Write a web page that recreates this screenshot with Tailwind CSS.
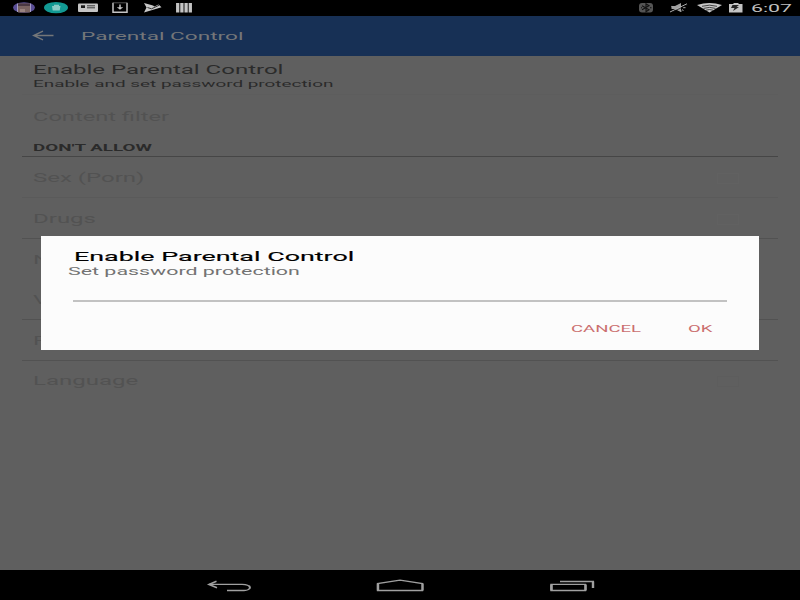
<!DOCTYPE html>
<html lang="en">
<head>
<meta charset="utf-8">
<title>Parental Control</title>
<script src="https://cdn.jsdelivr.net/npm/@tailwindcss/browser@4"></script>
</head>
<body class="w-[800px] h-[600px] overflow-hidden bg-black font-['Roboto',sans-serif]">
<div class="relative flex flex-col w-[800px] h-[600px]">
  <!-- Status bar -->
  <div class="h-4 shrink-0 bg-black">
    <svg class="block" width="800" height="16" viewBox="0 0 800 16">
      <ellipse cx="24" cy="7.5" rx="11" ry="5.3" fill="#5a4e96"/>
      <rect x="18" y="3.500" width="12" height="9" fill="#7a6462"/>
      <path d="M18 3.500h12v2.500H18z" fill="#4b3943"/><path d="M20 9h5v3h-5z" fill="#9a8480"/>
      <path d="M17.500 3.500v8.500M30.500 3.500v8.500" stroke="#a39bc4"/>
      <ellipse cx="56" cy="7.600" rx="12" ry="5.700" fill="#129993"/>
      <path d="M52 6h8.500l-.8 4.500h-7zM54 4.700h5v1.300h-5z" fill="#8acbc7"/>
      <rect x="78" y="3.500" width="20" height="8.500" rx="1" fill="#c4c4c4"/>
      <path d="M81 5.300h4v2.700h-4z" fill="#171717"/><path d="M87 5.800h8M87 7.800h8" stroke="#171717" stroke-width=".8"/>
      <path d="M113 2.700v9.600h14V2.700" fill="none" stroke="#c4c4c4" stroke-width="1.500"/>
      <path d="M113 2.800h14" stroke="#777" stroke-width=".7"/>
      <path d="M120 4.500v4" stroke="#c4c4c4" stroke-width="1.500"/><path d="M116.800 7.300h6.400L120 9.800z" fill="#c4c4c4"/>
      <path d="M144 3l9 2.600 1.500 1 4-2.200 3 2.800L144 12.500l2.500-5z" fill="#c9c9c9"/>
      <path d="M147.500 7.500l4 1.300 7.500-3.500" fill="none" stroke="#222" stroke-width=".9"/>
      <path d="M177.700 3v9.500M181.900 3v9.500M186.100 3v9.500M190.300 3v9.500" stroke="#c4c4c4" stroke-width="3.300"/>
      <rect x="639" y="3" width="14" height="9.500" rx="3" fill="#555"/>
      <path d="M642 5.700l7 4-3 2V3.800l3 2-7 4M641 7.700h1M650 7.700h1.500" fill="none" stroke="#111" stroke-width="1.100"/>
      <path d="M671.500 6h3.500l6-3v9l-6-3h-3.500z" fill="#a0a0a0"/>
      <path d="M671.500 6.300l10 5" stroke="#a0a0a0" stroke-width="1.500"/>
      <path d="M670 12L687 3.800M683 7.700h2.500M682 9.700l1.500.8" stroke="#b0b0b0" stroke-width="1"/>
      <path d="M672.500 12L688 4.600" stroke="#111" stroke-width=".7"/>
      <path d="M697 5Q709.500 1 722 5L709.500 12.500z" fill="#c8c8c8"/>
      <path d="M702 6.300q7.500-2.300 15 0M703.500 8.400q6-2 12 0M706 10.200q3.500-1.300 7 0" fill="none" stroke="#202020" stroke-width=".8"/>
      <path d="M729 4h4.500V3h5v1h4v8.500H729z" fill="#c4c4c4"/>
      <path d="M732.500 5h6.500l-2.500 2h2.500l-6 4 1.500-3h-3.500z" fill="#222"/>
      <text transform="translate(751 12) scale(2 1)" font-family="Roboto" font-size="11" textLength="20.500" lengthAdjust="spacingAndGlyphs" fill="#c0c0c0">6:07</text>
    </svg>
  </div>
  <!-- App bar -->
  <header class="flex items-center h-10 shrink-0 bg-[#173055] pl-8 text-[#747679]">
    <svg width="22" height="12" viewBox="0 0 22 12" fill="none" stroke="currentColor" stroke-width="1.400"><path d="M1.500 5.500H21.500M11 1.200L1.500 5.500l9.500 4.300"/></svg>
    <h1 class="mt-px ml-[26.500px] origin-left scale-x-200 text-[11.300px] leading-4">Parental Control</h1>
  </header>
  <!-- Settings -->
  <main class="flex flex-col h-[514px] shrink-0 bg-[#5f5f5f] px-[22px] text-[12px] text-[#525252]">
    <section class="h-[39px] pt-[7px] pl-[10.500px] text-[#2b2b2b] border-b border-[#5d5d5d]">
      <h2 class="w-fit origin-left scale-x-200 leading-[14px]">Enable Parental Control</h2>
      <p class="w-fit origin-left scale-x-200 text-[9.450px] leading-[13px]">Enable and set password protection</p>
    </section>
    <div class="flex items-center h-[43px] pl-[10.500px]"><span class="origin-left scale-x-[1.970]">Content filter</span></div>
    <div class="flex items-center h-[19px] pl-[10.500px] pt-px border-b border-[#464646] text-[#2b2b2b]"><h3 class="origin-left scale-x-[2.020] text-[9.300px] font-bold">DON'T ALLOW</h3></div>
    <div class="flex items-center justify-between h-[41px] pt-0.5 pl-[10.500px] pr-[39px] border-b border-[#5a5a5a]"><span class="origin-left scale-x-200">Sex (Porn)</span><i class="w-[22px] h-[11px] border border-[#616161]"></i></div>
    <div class="flex items-center justify-between h-[41px] pt-0.5 pl-[10.500px] pr-[39px] border-b border-[#525252]"><span class="origin-left scale-x-200">Drugs</span><i class="w-[22px] h-[11px] border border-[#616161]"></i></div>
    <div class="flex items-center h-[41px] pl-[10.500px]"><span class="origin-left scale-x-200">N</span></div>
    <div class="flex items-center h-10 pt-px pl-[10.500px] border-b border-[#525252]"><span class="origin-left scale-x-200">V</span></div>
    <div class="flex items-center h-[41px] pt-px pl-[10.500px] border-b border-[#525252]"><span class="origin-left scale-x-200">F</span></div>
    <div class="flex items-center justify-between h-10 pl-[10.500px] pr-[39px]"><span class="origin-left scale-x-200">Language</span><i class="w-[22px] h-[11px] border border-[#5d5d5d]"></i></div>
  </main>
  <!-- Navigation bar -->
  <nav class="h-[30px] shrink-0 bg-black">
    <svg class="block" width="800" height="30" viewBox="0 0 800 30" fill="none" stroke="#a0a0a0" stroke-width="1.300">
      <path d="M209 14.400H242C252 14.400 252 20.500 244 20.500H227"/><path d="M216.500 11.200L209 14.400L217 17.700" stroke-width="1.600"/>
      <path d="M249.200 15.800Q250.600 17.500 249.200 19" stroke-width="1.800"/>
      <path d="M377.500 20.500V13.500L400 10.200L422.500 13.500V20.500Z"/><path d="M378 20.500v-7M422.500 20.500v-7" stroke-width="2.400"/>
      <path d="M551 14.400H585.500V20.500H551Z"/><path d="M551.500 20.500v-6M585.500 20.500v-6" stroke-width="2.600"/>
      <path d="M560 11.500H594"/><path d="M593 11.500V18" stroke-width="2.400"/>
    </svg>
  </nav>
  <!-- Dialog -->
  <div role="dialog" class="absolute left-[41px] top-[236px] flex flex-col w-[718px] h-[114px] bg-[#fcfcfc]">
    <h2 class="w-fit mt-[13px] ml-[32.500px] origin-left scale-x-[2.020] text-[13.300px] leading-4 font-normal text-black [-webkit-text-stroke:0.15px_black]">Enable Parental Control</h2>
    <p class="w-fit ml-[27px] origin-left scale-x-[2.020] text-[10.600px] leading-[14px] text-[#737373]">Set password protection</p>
    <div class="mt-[21px] mx-8 h-[2px] bg-[#c2c2c2]"></div>
    <div class="flex mt-5 pl-[529.500px] text-[9px] leading-[14px] text-[#cb6f6f]">
      <div class="w-[117px]"><span class="inline-block origin-left scale-x-[2.060]">CANCEL</span></div>
      <div><span class="inline-block origin-left scale-x-[2.060]">OK</span></div>
    </div>
  </div>
</div>
</body>
</html>
